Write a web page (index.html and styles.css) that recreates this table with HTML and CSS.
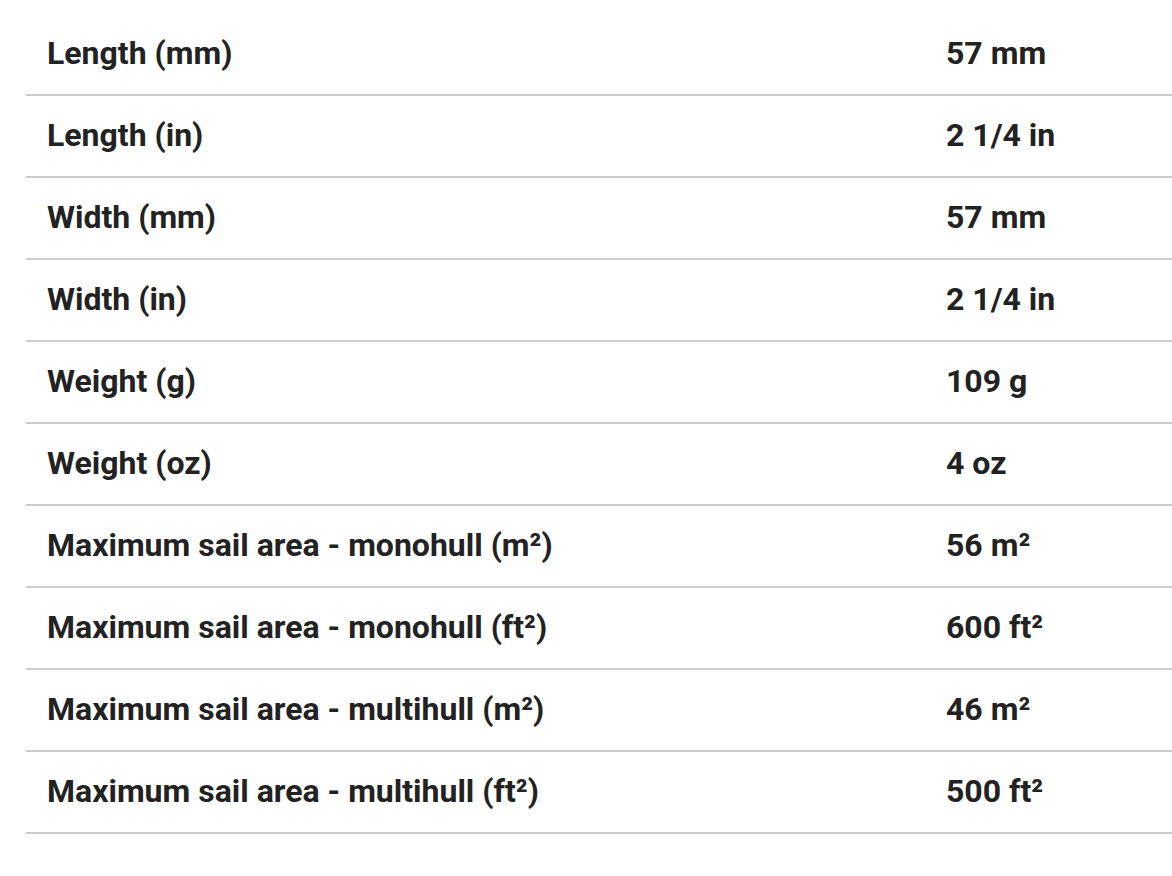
FILE: index.html
```html
<!DOCTYPE html>
<html lang="en">
<head>
<meta charset="utf-8">
<title>Specifications</title>
<link rel="stylesheet" href="styles.css">
</head>
<body>
<table class="specs">
  <tbody>
    <tr><th>Length (mm)</th><td>57 mm</td></tr>
    <tr><th>Length (in)</th><td>2 1/4 in</td></tr>
    <tr><th>Width (mm)</th><td>57 mm</td></tr>
    <tr><th>Width (in)</th><td>2 1/4 in</td></tr>
    <tr><th>Weight (g)</th><td>109 g</td></tr>
    <tr><th>Weight (oz)</th><td>4 oz</td></tr>
    <tr><th>Maximum sail area - monohull (m²)</th><td>56 m²</td></tr>
    <tr><th>Maximum sail area - monohull (ft²)</th><td>600 ft²</td></tr>
    <tr><th>Maximum sail area - multihull (m²)</th><td>46 m²</td></tr>
    <tr><th>Maximum sail area - multihull (ft²)</th><td>500 ft²</td></tr>
  </tbody>
</table>
</body>
</html>
```

FILE: styles.css
```css
html, body {
  margin: 0;
  padding: 0;
  background: #fff;
}
body {
  padding: 14px 0 0 26px;
  font-family: Roboto, "Liberation Sans", Arial, sans-serif;
  color: #222;
}
.specs {
  width: 1146px;
  border-collapse: collapse;
}
.specs th,
.specs td {
  height: 78px;
  padding: 0 21px 2px;
  border-bottom: 2px solid #cccccc;
  font-size: 32px;
  font-weight: 700;
  line-height: 1.2;
  text-align: left;
  vertical-align: middle;
}
.specs th {
  width: 857px;
}
```
